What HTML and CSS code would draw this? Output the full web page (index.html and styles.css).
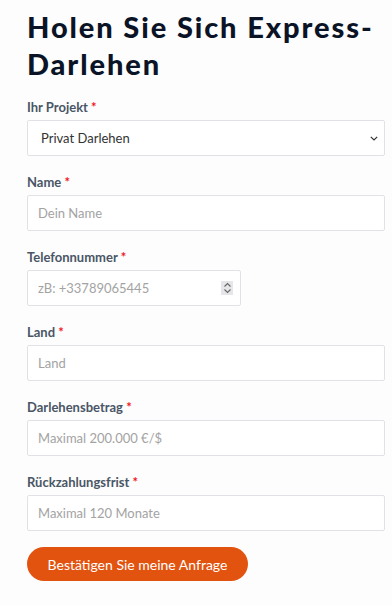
FILE: index.html
```html
<!DOCTYPE html>
<html lang="de">
<head>
    <meta charset="UTF-8">
    <meta name="viewport" content="width=device-width, initial-scale=1.0">
    <title>Express-Darlehen</title>
    <link rel="stylesheet" href="styles.css">
</head>
<body>
    <div class="wrap">
        <h1>Holen Sie Sich Express-Darlehen</h1>
        <form class="loan-form" onsubmit="return false">
            <div class="field">
                <label for="projekt">Ihr Projekt <span class="req">*</span></label>
                <div class="select-box">
                    <select id="projekt">
                        <option>Privat Darlehen</option>
                        <option>Auto Darlehen</option>
                        <option>Immobilien Darlehen</option>
                    </select>
                    <svg class="chev" width="8" height="5" viewBox="0 0 8 5"><path d="M0.8 0.8 L4 4 L7.2 0.8" fill="none" stroke="#333" stroke-width="1.2"/></svg>
                </div>
            </div>
            <div class="field">
                <label for="name">Name <span class="req">*</span></label>
                <input id="name" type="text" placeholder="Dein Name">
            </div>
            <div class="field">
                <label for="tel">Telefonnummer <span class="req">*</span></label>
                <div class="tel-box">
                    <input id="tel" type="text" placeholder="zB: +33789065445">
                    <span class="spin">
                        <svg width="9" height="12" viewBox="0 0 9 12"><path d="M1.5 4.5 L4.5 1.5 L7.5 4.5 M1.5 7.5 L4.5 10.5 L7.5 7.5" fill="none" stroke="#666" stroke-width="1.1"/></svg>
                    </span>
                </div>
            </div>
            <div class="field">
                <label for="land">Land <span class="req">*</span></label>
                <input id="land" type="text" placeholder="Land">
            </div>
            <div class="field">
                <label for="betrag">Darlehensbetrag <span class="req">*</span></label>
                <input id="betrag" type="text" placeholder="Maximal 200.000 €/$">
            </div>
            <div class="field">
                <label for="frist">Rückzahlungsfrist <span class="req">*</span></label>
                <input id="frist" type="text" placeholder="Maximal 120 Monate">
            </div>
            <button type="submit">Bestätigen Sie meine Anfrage</button>
        </form>
    </div>
</body>
</html>
```
FILE: styles.css
```css
body { margin: 0; background: #fdfdfd; font-family: Lato, "Liberation Sans", sans-serif; }
.wrap { width: 358px; padding: 8px 0 0 27px; }
h1 { font-family: Lato, "Liberation Sans", sans-serif; font-weight: 900; font-size: 29px; line-height: 37px; letter-spacing: 1.9px; color: #0b1426; margin: 0 0 15px; }
.field { margin-bottom: 16px; }
label { display: block; font-size: 13px; font-weight: 700; line-height: 20px; color: #4a5666; margin-bottom: 3px; }
.req { color: #f0141e; }
input, select { box-sizing: border-box; width: 100%; height: 36px; border: 1px solid #e2e2e6; border-radius: 2px; background: #fff; padding: 0 10px; font-family: Lato, "Liberation Sans", sans-serif; font-size: 13px; color: #333; outline: none; }
select { padding-left: 13px; }
input::placeholder { color: #a3a3a3; }
.select-box { position: relative; }
select { appearance: none; -webkit-appearance: none; }
.chev { position: absolute; right: 7px; top: 16px; pointer-events: none; }
.tel-box { position: relative; width: 214px; }
.spin { position: absolute; right: 8px; top: 11px; width: 12px; height: 14px; background: #e6e6ea; display: flex; align-items: center; justify-content: center; }
button { width: 221px; height: 34px; border: none; border-radius: 17px; background: #e2530f; color: #fff; font-family: Lato, "Liberation Sans", sans-serif; font-size: 14px; cursor: pointer; }
```
